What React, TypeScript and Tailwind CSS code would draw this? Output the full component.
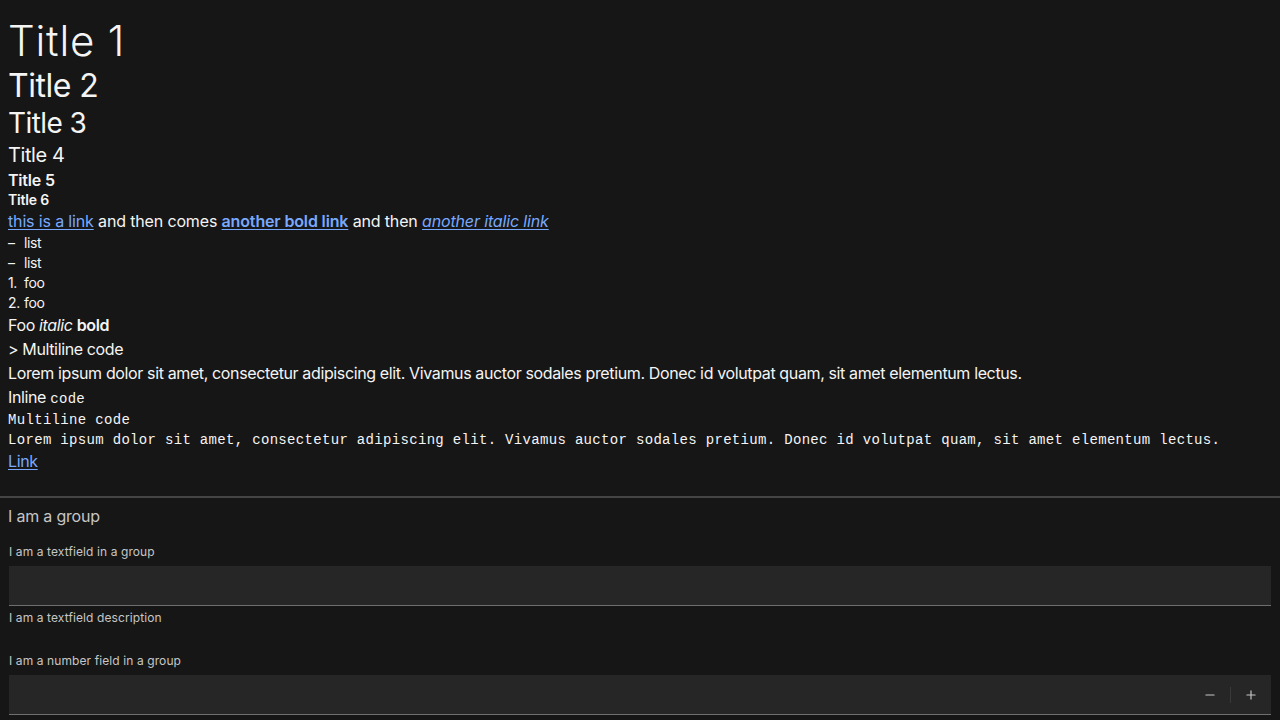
import { Minus, Plus } from 'lucide-react';

const sans = "font-['Inter','Noto_Sans',sans-serif]";
const mono = "font-['Liberation_Mono','DejaVu_Sans_Mono',monospace] tracking-[0.32px]";

function Field({ label, helper, number }: { label: string; helper?: string; number?: boolean }) {
  return (
    <div className="flex flex-col">
      <label className="text-xs leading-4 tracking-[0.1px] text-[#c6c6c6] mb-[6px]">{label}</label>
      <div className="h-10 bg-[#262626] border-b border-[#6f6f6f] flex items-center justify-end">
        {number && (
          <div className="flex items-center h-full">
            <button className="w-10 h-full flex items-center justify-center text-[#c6c6c6]">
              <Minus size={14} strokeWidth={2} />
            </button>
            <span className="w-px h-4 bg-[#393939]" />
            <button className="w-10 h-full flex items-center justify-center text-[#c6c6c6]">
              <Plus size={14} strokeWidth={2} />
            </button>
          </div>
        )}
      </div>
      {helper && <p className="text-xs leading-4 tracking-[0.1px] text-[#c6c6c6] mt-1">{helper}</p>}
    </div>
  );
}

export default function App() {
  return (
    <div className={`h-[720px] overflow-hidden bg-[#161616] text-[#f4f4f4] ${sans}`}>
      <div className="px-2 pt-4">
        <h1 className="text-[42px] leading-[50px] font-light tracking-[0.8px]">Title 1</h1>
        <h2 className="text-[32px] leading-[40px] font-normal tracking-[-0.5px]">Title 2</h2>
        <h3 className="text-[28px] leading-[35px] font-normal tracking-[-0.6px]">Title 3</h3>
        <h4 className="text-[20px] leading-[28px] font-normal tracking-[-0.4px]">Title 4</h4>
        <h5 className="text-base leading-[22px] font-semibold tracking-[-0.2px]">Title 5</h5>
        <h6 className="text-sm leading-[18px] font-semibold tracking-[-0.2px]">Title 6</h6>
        <div className="tracking-[-0.37px]">
          <p className="text-base leading-6 tracking-[-0.15px]">
            <a className="text-[#78a9ff] underline underline-offset-2">this is a link</a> and then comes{' '}
            <a className="text-[#78a9ff] underline underline-offset-2 font-semibold">another bold link</a> and then{' '}
            <a className="text-[#78a9ff] underline underline-offset-2 italic">another italic link</a>
          </p>
          <ul className="text-sm leading-5">
            <li className="flex"><span className="w-4">–</span>list</li>
            <li className="flex"><span className="w-4">–</span>list</li>
          </ul>
          <ol className="text-sm leading-5">
            <li className="flex"><span className="w-4">1.</span>foo</li>
            <li className="flex"><span className="w-4">2.</span>foo</li>
          </ol>
          <p className="text-base leading-6">
            Foo <em>italic</em> <strong className="font-semibold">bold</strong>
          </p>
          <p className="text-base leading-6">&gt; Multiline code</p>
          <p className="text-base leading-6">
            Lorem ipsum dolor sit amet, consectetur adipiscing elit. Vivamus auctor sodales pretium. Donec id volutpat quam, sit amet elementum lectus.
          </p>
          <p className="text-base leading-6">
            Inline <code className={`text-sm ${mono}`}>code</code>
          </p>
        </div>
        <pre className={`text-sm leading-5 pt-px -mb-px ${mono}`}>
          {'Multiline code\nLorem ipsum dolor sit amet, consectetur adipiscing elit. Vivamus auctor sodales pretium. Donec id volutpat quam, sit amet elementum lectus.'}
        </pre>
        <a className="text-base leading-6 tracking-[-0.37px] text-[#78a9ff] underline underline-offset-2">Link</a>
      </div>

      <div className="mt-[23px] h-[2px] bg-[#444444]" />

      <fieldset className="px-2 pt-[6px]">
        <legend className="float-left w-full text-base leading-6 tracking-[-0.2px] text-[#c6c6c6] mb-4">I am a group</legend>
        <div className="clear-both flex flex-col gap-[27px] px-px">
          <Field label="I am a textfield in a group" helper="I am a textfield description" />
          <Field label="I am a number field in a group" number />
        </div>
      </fieldset>
    </div>
  );
}
